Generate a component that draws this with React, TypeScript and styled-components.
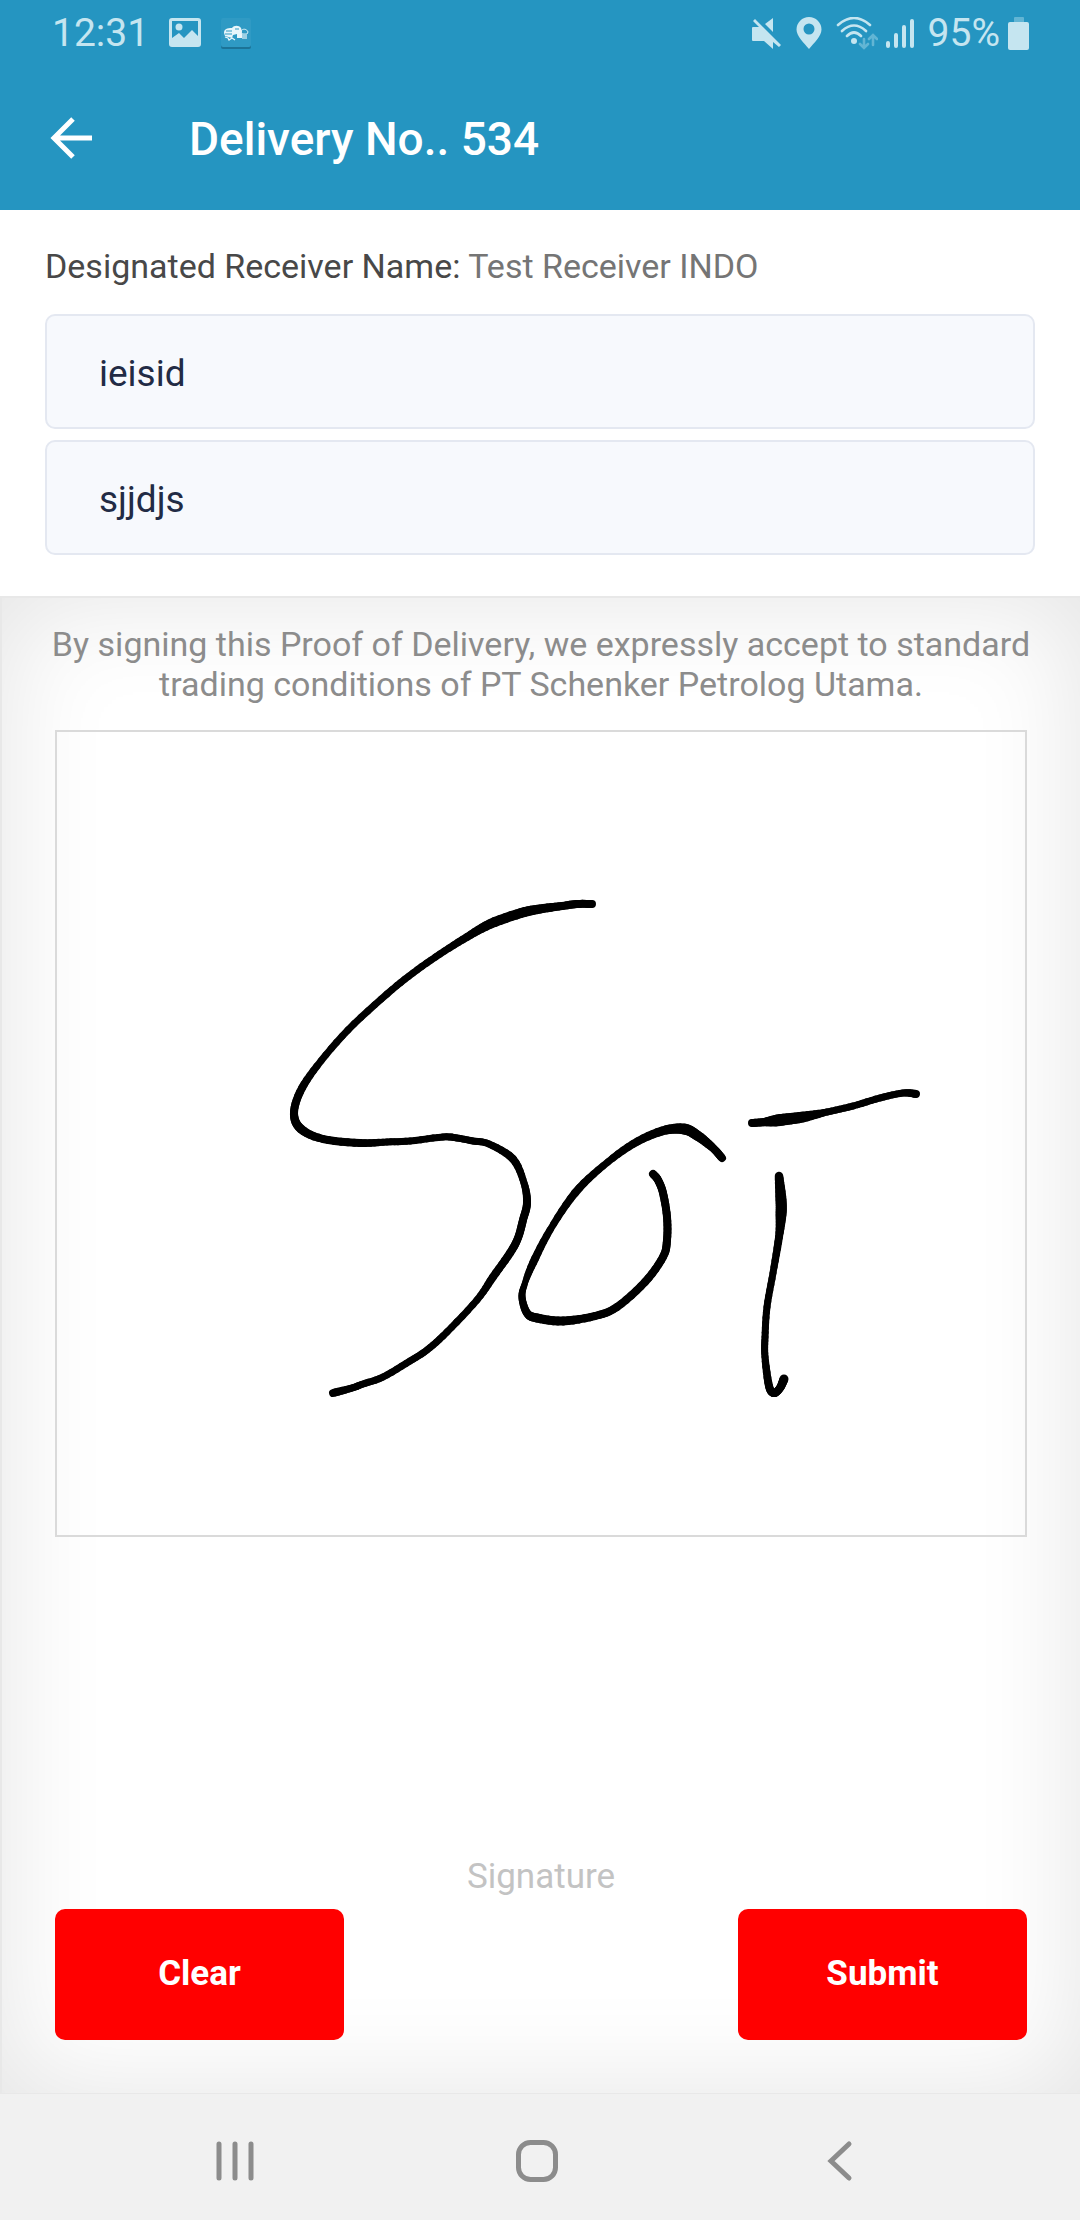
import React, { useState } from "react";
import styled, { createGlobalStyle } from "styled-components";

const GlobalStyle = createGlobalStyle`
  * { box-sizing: border-box; }
  html, body, #root { height: 100%; }
  body { margin: 0; background: #fff; font-family: Roboto, "Noto Sans", sans-serif; }
  button, input { font-family: inherit; }
`;

const Screen = styled.div`
  display: flex;
  flex-direction: column;
  min-height: 100%;
`;

const Header = styled.header`
  background: #2595c1;
  color: #fff;
`;

const StatusBar = styled.div`
  display: flex;
  justify-content: space-between;
  height: 66px;
  padding: 0 50px 0 52px;
  color: #c5e5f0;
  font-size: 39px;
  line-height: 66px;
`;

const Cluster = styled.div<{ $gap: number }>`
  display: flex;
  align-items: center;
  gap: ${(p) => p.$gap}px;
  svg { display: block; }
`;

const TitleBar = styled.div`
  display: flex;
  align-items: center;
  gap: 94px;
  height: 144px;
  padding: 0 47px;
`;

const IconButton = styled.button`
  display: flex;
  padding: 0;
  border: 0;
  background: none;
  color: inherit;
  cursor: pointer;
`;

const Title = styled.h1`
  margin: 0;
  padding-top: 2px;
  font-size: 46px;
  font-weight: 500;
  line-height: 56px;
`;

const ReceiverForm = styled.section`
  padding: 36px 45px 41px;
  background: #fff;
`;

const ReceiverLine = styled.p`
  margin: 0 0 28px;
  color: #484848;
  font-size: 34px;
  line-height: 40px;
`;

const ReceiverName = styled.span`
  color: #757575;
`;

const FieldStack = styled.div`
  display: grid;
  gap: 11px;
`;

const Field = styled.input`
  width: 100%;
  height: 115px;
  padding: 4px 52px 0;
  border: 2px solid #e4e8f1;
  border-radius: 10px;
  background: #f7f9fd;
  color: #222b45;
  font-size: 37px;
  outline: none;
`;

const SignaturePad = styled.section`
  display: flex;
  flex: 1;
  flex-direction: column;
  padding: 26px 53px 53px;
  border: solid #e8e8e8;
  border-width: 2px 0 1px 2px;
  box-shadow: inset 0 0 110px rgba(0, 0, 0, 0.11);
`;

const Terms = styled.p`
  margin: 0 -10px 26px;
  color: #8c8c8c;
  font-size: 34px;
  line-height: 40px;
  text-align: center;
`;

const DrawingArea = styled.div`
  border: 2px solid #dadada;
  svg { display: block; width: 100%; height: auto; }
`;

const Caption = styled.p`
  margin: auto 0 12px;
  color: #c3c3c3;
  font-size: 35px;
  line-height: 40px;
  text-align: center;
`;

const Actions = styled.div`
  display: flex;
  justify-content: space-between;
`;

const ActionButton = styled.button`
  width: 289px;
  height: 131px;
  padding: 0 0 3px;
  border: 0;
  border-radius: 10px;
  background: #f00;
  color: #fff;
  font-size: 35px;
  font-weight: 700;
  cursor: pointer;
`;

const NavBar = styled.nav`
  display: flex;
  align-items: center;
  justify-content: space-between;
  height: 126px;
  padding: 8px 214px 0 208px;
  background: #f1f1f1;
  color: #8c8c8c;
`;

type Point = [number, number, number];

/* Pen strokes: x, y and the pen width at each sample. */
const penStrokes: Point[][] = [
  [
    [592, 904, 8], [577, 904, 8], [562, 906, 8], [540, 909, 9], [521, 913, 10], [490, 924, 10],
    [467, 937, 8], [440, 954, 7], [413, 973, 7], [387, 994, 7], [348, 1030, 7], [317, 1066, 7],
    [300, 1092, 8], [294, 1114, 8], [301, 1129, 9], [323, 1139, 8], [360, 1143, 8], [387, 1142, 7],
    [410, 1141, 7], [443, 1137, 7], [457, 1138, 7], [473, 1141, 7], [489, 1144, 7], [513, 1159, 8],
    [524, 1183, 7], [527, 1203, 8], [523, 1220, 8], [518, 1238, 8], [510, 1253, 8], [493, 1277, 8],
    [477, 1300, 7], [447, 1332, 7], [427, 1350, 7], [410, 1361, 7], [383, 1377, 7], [363, 1384, 7],
    [352, 1388, 7], [333, 1393, 8],
  ],
  [
    [722, 1158, 8], [713, 1148, 8], [698, 1136, 10], [684, 1129, 11], [662, 1131, 9], [633, 1144, 8],
    [603, 1166, 7], [575, 1193, 8], [550, 1230, 7], [533, 1263, 8], [525, 1283, 6], [522, 1297, 7],
    [527, 1313, 8], [537, 1318, 9], [563, 1321, 9], [595, 1316, 8], [617, 1307, 8], [645, 1282, 8],
    [663, 1257, 8], [667, 1240, 8], [667, 1217, 8], [663, 1193, 8], [658, 1180, 8], [653, 1174, 8],
  ],
  [
    [752, 1123, 8], [765, 1122, 8], [780, 1120, 12], [803, 1117, 11], [827, 1112, 7],
    [853, 1106, 7], [880, 1098, 7], [903, 1093, 7], [916, 1094, 8],
  ],
  [
    [779, 1176, 8], [781, 1200, 11], [781, 1215, 11], [779, 1237, 8], [773, 1273, 7],
    [767, 1307, 7], [765, 1337, 7], [765, 1357, 7], [769, 1386, 8], [774, 1393, 8],
    [780, 1388, 8], [784, 1379, 9],
  ],
];

const spline = (a: number, b: number, c: number, d: number, t: number) =>
  0.5 * (2 * b + (c - a) * t + (2 * a - 5 * b + 4 * c - d) * t * t + (3 * b - a - 3 * c + d) * t * t * t);

function smooth(points: Point[]): Point[] {
  const result: Point[] = [];
  for (let i = 0; i < points.length - 1; i++) {
    const a = points[Math.max(i - 1, 0)];
    const b = points[i];
    const c = points[i + 1];
    const d = points[Math.min(i + 2, points.length - 1)];
    for (let s = 0; s < 6; s++) {
      const t = s / 6;
      result.push([
        spline(a[0], b[0], c[0], d[0], t),
        spline(a[1], b[1], c[1], d[1], t),
        b[2] + (c[2] - b[2]) * t,
      ]);
    }
  }
  result.push(points[points.length - 1]);
  return result;
}

const PenStroke = ({ points }: { points: Point[] }) => {
  const line = smooth(points);
  return (
    <g stroke="#000" strokeLinecap="round">
      {line.slice(1).map((p, i) => (
        <line key={i} x1={line[i][0]} y1={line[i][1]} x2={p[0]} y2={p[1]} strokeWidth={p[2]} />
      ))}
    </g>
  );
};

const PictureIcon = () => (
  <svg width="32" height="30" viewBox="0 0 32 30" fill="currentColor" aria-hidden="true">
    <path
      fillRule="evenodd"
      d="M3 0h26a3 3 0 0 1 3 3v23a3 3 0 0 1-3 3H3a3 3 0 0 1-3-3V3a3 3 0 0 1 3-3zM3 3v17l7-5 5 5 8-8 6 6V3z"
    />
    <circle cx="10" cy="9" r="3.5" />
  </svg>
);

const TruckAppIcon = () => (
  <svg width="30" height="31" viewBox="0 0 30 31" aria-hidden="true">
    <rect y="1" width="30" height="30" rx="2" fill="#1c7397" />
    <rect width="30" height="29" rx="2" fill="#2f9ac4" />
    <path d="M3 15c0-4 3-5 8-5 2-3 7-3 9 0l1 3v7h-5v-4l-4 1-1 3-7-2z" fill="#e8f6fb" />
    <path d="M5 13h6M4 16h7M14 11h4" stroke="#2f9ac4" strokeWidth="1.2" />
    <path d="M4 19l3 1 1 2 3-2 3 2" stroke="#e8f6fb" strokeWidth="1.2" fill="none" />
    <path d="M20 13c2-3 6-2 7 1l-1 2h-5z" fill="none" stroke="#d6eef7" strokeWidth="1" />
    <path d="M21 16h5v5h-5z" fill="#9bd0e4" />
  </svg>
);

const MutedIcon = () => (
  <svg width="30" height="33" viewBox="0 0 30 33" fill="currentColor" aria-hidden="true">
    <path d="M1 10h6L1 4l2-2 26 26-2 2-6-5v7l-9-8H1q-1 0-1-1V11q0-1 1-1zM21 1v14l-8-8z" />
  </svg>
);

const PinIcon = () => (
  <svg width="26" height="32" viewBox="0 0 26 32" fill="currentColor" aria-hidden="true">
    <path
      fillRule="evenodd"
      d="M13 0a12.500 12.500 0 0 1 12.500 12.500C25.500 19 18 26 13 32 8 26 .5 19 .5 12.500A12.500 12.500 0 0 1 13 0zm0 6.500a5.500 5.500 0 1 0 0 11 5.500 5.500 0 0 0 0-11z"
    />
  </svg>
);

const WifiIcon = () => (
  <svg width="42" height="33" viewBox="0 0 42 33" fill="none" strokeLinecap="round" aria-hidden="true">
    <g stroke="currentColor" strokeWidth="2.600">
      <path d="M2 8q16-14 32 0M6 14q12-11 24 0M11 19q7-7 14 0" />
    </g>
    <circle cx="18" cy="24" r="3" fill="currentColor" />
    <g stroke="#62b5d4" strokeWidth="2.600">
      <path d="M28 22v8M24 27l4 4 4-4M37 28v-9M33 22l4-4 4 4" />
    </g>
  </svg>
);

const SignalIcon = () => (
  <svg width="28" height="31" viewBox="0 0 28 31" stroke="currentColor" strokeWidth="4" strokeLinecap="round" aria-hidden="true">
    <path d="M2 25v3M10 17v11M18 9v19M26 3v25" />
  </svg>
);

const BatteryIcon = () => (
  <svg width="22" height="33" viewBox="0 0 22 33" aria-hidden="true">
    <rect x="6" width="10" height="6" rx="1" fill="#62b5d4" />
    <rect y="5" width="21" height="28" rx="2" fill="currentColor" />
  </svg>
);

const BackArrow = () => (
  <svg width="48" height="48" viewBox="0 0 48 48" fill="none" stroke="currentColor" strokeWidth="5" aria-hidden="true">
    <path d="M45 24H7M26 5L7 24l19 19" />
  </svg>
);

const RecentsIcon = () => (
  <svg width="54" height="54" viewBox="0 0 54 54" stroke="currentColor" strokeWidth="5" strokeLinecap="round" aria-hidden="true">
    <path d="M11 10v34M27 10v34M43 10v34" />
  </svg>
);

const HomeIcon = () => (
  <svg width="54" height="54" viewBox="0 0 54 54" fill="none" stroke="currentColor" strokeWidth="5" aria-hidden="true">
    <rect x="8.500" y="8.500" width="37" height="37" rx="12" />
  </svg>
);

const NavBackIcon = () => (
  <svg width="54" height="54" viewBox="0 0 54 54" fill="none" stroke="currentColor" strokeWidth="5" strokeLinecap="round" aria-hidden="true">
    <path d="M37 10L19 27l18 17" />
  </svg>
);

export default function App() {
  const [name, setName] = useState("ieisid");
  const [note, setNote] = useState("sjjdjs");
  const [strokes, setStrokes] = useState(penStrokes);

  return (
    <>
      <GlobalStyle />
      <Screen>
        <Header>
          <StatusBar>
            <Cluster $gap={20}>
              <span>12:31</span>
              <PictureIcon />
              <TruckAppIcon />
            </Cluster>
            <Cluster $gap={14}>
              <MutedIcon />
              <PinIcon />
              <Cluster $gap={8}>
                <WifiIcon />
                <SignalIcon />
              </Cluster>
              <Cluster $gap={8}>
                <span>95%</span>
                <BatteryIcon />
              </Cluster>
            </Cluster>
          </StatusBar>
          <TitleBar>
            <IconButton type="button" aria-label="Back">
              <BackArrow />
            </IconButton>
            <Title>Delivery No.. 534</Title>
          </TitleBar>
        </Header>

        <ReceiverForm>
          <ReceiverLine>
            Designated Receiver Name: <ReceiverName>Test Receiver INDO</ReceiverName>
          </ReceiverLine>
          <FieldStack>
            <Field aria-label="Receiver name" value={name} onChange={(e) => setName(e.target.value)} />
            <Field aria-label="Remarks" value={note} onChange={(e) => setNote(e.target.value)} />
          </FieldStack>
        </ReceiverForm>

        <SignaturePad>
          <Terms>
            By signing this Proof of Delivery, we expressly accept to standard trading conditions of PT Schenker
            Petrolog Utama.
          </Terms>
          <DrawingArea>
            <svg viewBox="57 732 968 803" role="img" aria-label="Signature drawing">
              {strokes.map((points, i) => (
                <PenStroke key={i} points={points} />
              ))}
            </svg>
          </DrawingArea>
          <Caption>Signature</Caption>
          <Actions>
            <ActionButton type="button" onClick={() => setStrokes([])}>
              Clear
            </ActionButton>
            <ActionButton type="button">Submit</ActionButton>
          </Actions>
        </SignaturePad>

        <NavBar>
          <IconButton type="button" aria-label="Recent apps">
            <RecentsIcon />
          </IconButton>
          <IconButton type="button" aria-label="Home">
            <HomeIcon />
          </IconButton>
          <IconButton type="button" aria-label="Back">
            <NavBackIcon />
          </IconButton>
        </NavBar>
      </Screen>
    </>
  );
}
